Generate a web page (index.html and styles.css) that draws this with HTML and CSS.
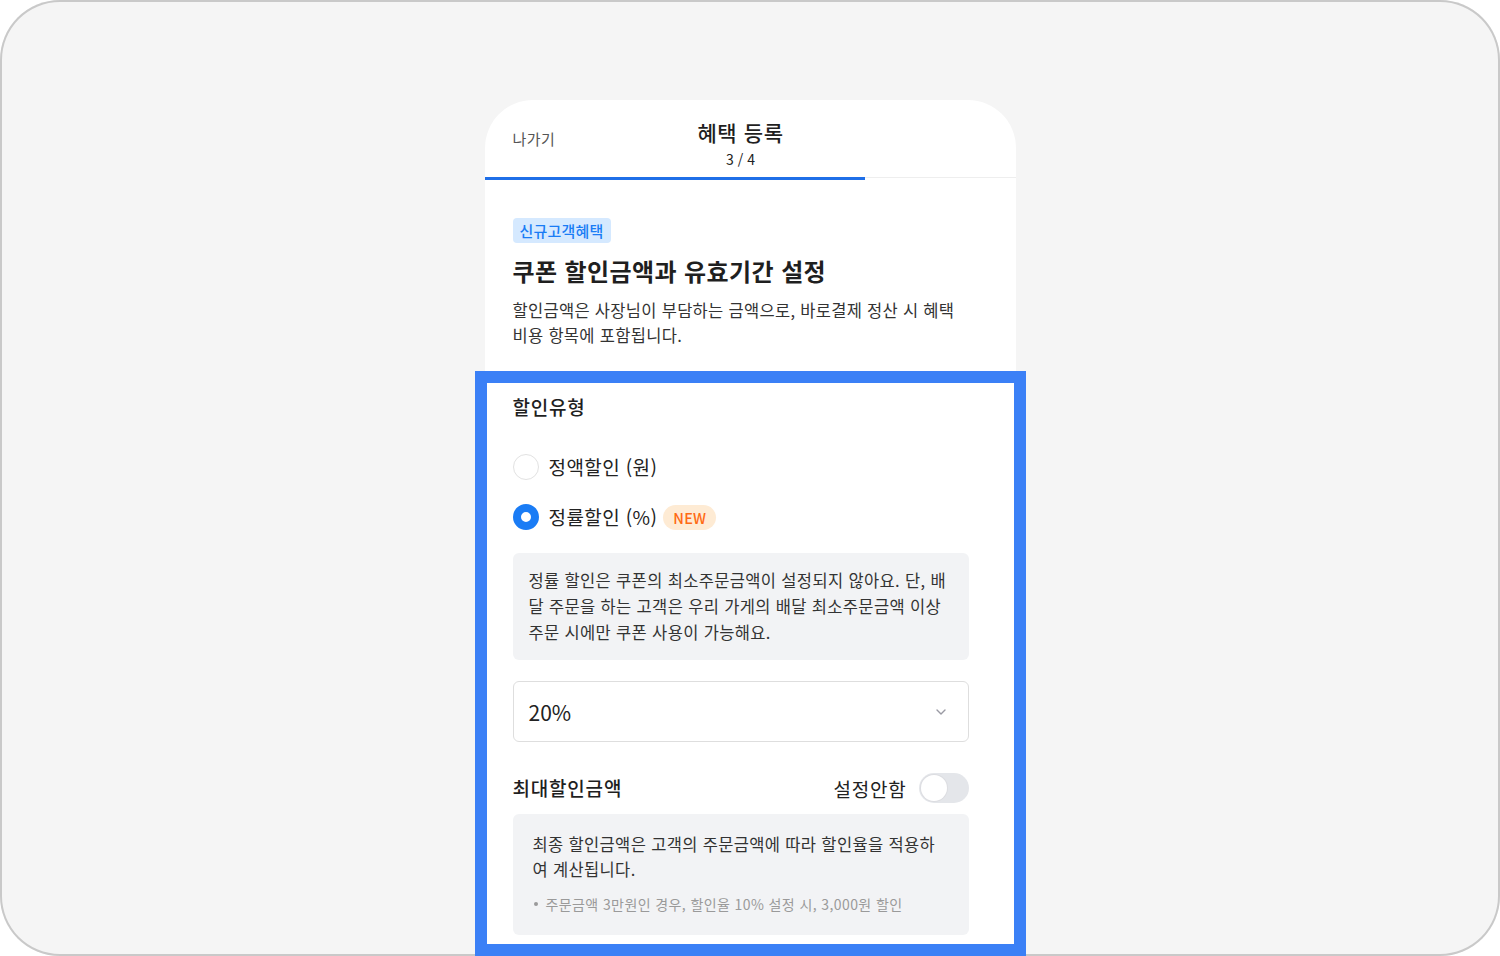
FILE: index.html
```html
<!DOCTYPE html>
<html lang="ko">
<head>
    <meta charset="UTF-8">
    <meta name="viewport" content="width=device-width, initial-scale=1.0">
    <title>혜택 등록</title>
    <link rel="stylesheet" href="styles.css">
</head>
<body>
    <div class="frame">
        <div class="phone">
            <!-- Top bar -->
            <header class="topbar">
                <span class="back-link">나가기</span>
                <div class="title-wrap">
                    <h1>혜택 등록</h1>
                    <span class="step">3 / 4</span>
                </div>
                <span></span>
            </header>
            <div class="progress"><div class="progress-fill"></div></div>

            <!-- Intro -->
            <section class="intro">
                <span class="tag">신규고객혜택</span>
                <h2>쿠폰 할인금액과 유효기간 설정</h2>
                <p>할인금액은 사장님이 부담하는 금액으로, 바로결제 정산 시 혜택<br>비용 항목에 포함됩니다.</p>
            </section>

            <!-- Discount type -->
            <section class="focus-block">
                <h3 class="field-label">할인유형</h3>

                <div class="radio-list">
                    <label class="radio-row">
                        <span class="radio"></span>
                        <span class="radio-text">정액할인 (원)</span>
                    </label>
                    <label class="radio-row">
                        <span class="radio checked"></span>
                        <span class="radio-text">정률할인 (%)</span>
                        <span class="new-badge">NEW</span>
                    </label>
                </div>

                <div class="notice">
                    정률 할인은 쿠폰의 최소주문금액이 설정되지 않아요. 단, 배<br>
                    달 주문을 하는 고객은 우리 가게의 배달 최소주문금액 이상<br>
                    주문 시에만 쿠폰 사용이 가능해요.
                </div>

                <div class="select-box">
                    <span>20%</span>
                    <svg width="12" height="8" viewBox="0 0 12 8" fill="none">
                        <path d="M2 2l4 4 4-4" stroke="#9a9aa3" stroke-width="1.4" stroke-linecap="round" stroke-linejoin="round"/>
                    </svg>
                </div>

                <div class="max-row">
                    <span class="field-label">최대할인금액</span>
                    <div class="switch-wrap">
                        <span class="switch-text">설정안함</span>
                        <span class="switch"><span class="knob"></span></span>
                    </div>
                </div>

                <div class="notice notice-wide">
                    <p>최종 할인금액은 고객의 주문금액에 따라 할인율을 적용하<br>여 계산됩니다.</p>
                    <p class="bullet">주문금액 3만원인 경우, 할인율 10% 설정 시, 3,000원 할인</p>
                </div>
            </section>
        </div>
    </div>
</body>
</html>
```

FILE: styles.css
```css
:root {
    --blue: #1a7cf5;
    --focus-blue: #3b80f6;
    --text-dark: #1f1f1f;
    --text-body: #333;
    --box-gray: #f2f3f5;
}

* {
    margin: 0;
    padding: 0;
    box-sizing: border-box;
}

body {
    background: #fff;
    font-family: "Noto Sans CJK KR", "Noto Sans", sans-serif;
    color: var(--text-dark);
}

.frame {
    width: 1500px;
    height: 956px;
    background: #f5f5f5;
    border-radius: 60px;
    box-shadow: inset 0 0 0 2px #c9c9c9;
    overflow: hidden;
}

.phone {
    width: 531px;
    margin: 100px auto 0;
    background: #fff;
    border-radius: 48px 48px 0 0;
}

/* Top bar */
.topbar {
    height: 77px;
    padding: 0 47px 0 28px;
    display: grid;
    grid-template-columns: 1fr auto 1fr;
    align-items: start;
}

.back-link {
    margin-top: 29px;
    font-size: 15px;
    line-height: 20px;
    color: #555;
    letter-spacing: 0.5px;
}

.title-wrap {
    padding-top: 18px;
    display: flex;
    flex-direction: column;
    align-items: center;
}

.title-wrap h1 {
    font-size: 21px;
    line-height: 28px;
    font-weight: 500;
    letter-spacing: 0.6px;
}

.step {
    margin-top: 3px;
    font-size: 14px;
    line-height: 20px;
    color: #222;
}

.progress {
    height: 3px;
    background: linear-gradient(#eee 0 1px, transparent 1px);
}

.progress-fill {
    width: 380px;
    height: 3px;
    background: #1f6fe8;
}

/* Intro */
.intro {
    padding: 38px 47px 23px 28px;
    display: flex;
    flex-direction: column;
    align-items: flex-start;
}

.tag {
    height: 25px;
    line-height: 25px;
    padding: 0 7px;
    border-radius: 4px;
    background: #d5e9ff;
    color: var(--blue);
    font-size: 15px;
    font-weight: 500;
    letter-spacing: 0.2px;
}

.intro h2 {
    margin-top: 11px;
    font-size: 24px;
    line-height: 34px;
    font-weight: 700;
    letter-spacing: 0.4px;
}

.intro p {
    margin-top: 10px;
    font-size: 16.5px;
    line-height: 25px;
    color: var(--text-body);
    letter-spacing: 0.3px;
    white-space: nowrap;
}

/* Highlighted discount block */
.focus-block {
    margin: 0 -10px;
    border: 12px solid var(--focus-blue);
    background: #fff;
    padding: 11px 45px 9px 26px;
}

.field-label {
    font-size: 19px;
    line-height: 26px;
    font-weight: 500;
    letter-spacing: 0.8px;
}

.radio-list {
    margin-top: 34px;
    display: flex;
    flex-direction: column;
    gap: 24px;
}

.radio-row {
    height: 26px;
    display: flex;
    align-items: center;
}

.radio {
    width: 26px;
    height: 26px;
    border-radius: 50%;
    border: 1.5px solid #e2e2e2;
    margin-right: 10px;
}

.radio.checked {
    border: 8px solid var(--blue);
    background: #fff;
}

.radio-text {
    font-size: 19px;
    line-height: 26px;
    color: #222;
    letter-spacing: 0.4px;
}

.new-badge {
    margin-left: 6px;
    height: 25px;
    line-height: 25px;
    padding: 0 10px;
    border-radius: 13px;
    background: #feebd4;
    color: #ff6a13;
    font-size: 14.5px;
    font-weight: 500;
    letter-spacing: 0.2px;
}

.notice {
    margin-top: 23px;
    padding: 14px 16px 15px;
    background: var(--box-gray);
    border-radius: 6px;
    font-size: 16.5px;
    line-height: 26px;
    color: var(--text-body);
    letter-spacing: 0.35px;
    white-space: nowrap;
}

.select-box {
    margin-top: 21px;
    height: 61px;
    padding: 0 21px 0 15px;
    border: 1px solid #dedede;
    border-radius: 6px;
    display: flex;
    align-items: center;
    justify-content: space-between;
    font-size: 21px;
    color: #222;
}

.max-row {
    margin-top: 31px;
    height: 30px;
    display: flex;
    align-items: center;
    justify-content: space-between;
}

.switch-wrap {
    display: flex;
    align-items: center;
    gap: 12px;
}

.switch-text {
    font-size: 19px;
    color: #222;
    letter-spacing: 0.8px;
}

.switch {
    width: 50px;
    height: 30px;
    border-radius: 15px;
    background: #e4e6ea;
    padding: 2px;
}

.knob {
    display: block;
    width: 26px;
    height: 26px;
    border-radius: 50%;
    background: #fff;
    box-shadow: 0 0 0 1px #dcdde1;
}

.notice-wide {
    margin-top: 11px;
    padding: 18px 20px 21px;
    line-height: 25px;
}

.bullet {
    position: relative;
    margin-top: 12px;
    padding-left: 13px;
    font-size: 14px;
    line-height: 20px;
    color: #9a9a9a;
    letter-spacing: 0.4px;
}

.bullet::before {
    content: "";
    position: absolute;
    left: 1px;
    top: 8px;
    width: 4px;
    height: 4px;
    border-radius: 50%;
    background: #9a9a9a;
}
```
